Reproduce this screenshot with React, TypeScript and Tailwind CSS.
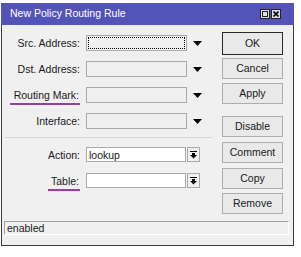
import type { ReactNode } from 'react';

const font = { fontFamily: '"Liberation Sans", Arial, sans-serif' };

function Arrow() {
  return (
    <svg width="9" height="5" viewBox="0 0 9 5" className="ml-[6px] shrink-0">
      <polygon points="0,0 9,0 4.5,5" fill="#000" />
    </svg>
  );
}

function DropButton() {
  return (
    <div className="w-[13px] h-[15px] ml-[1px] border border-[#a9a9a9] bg-[#f0f0f0] flex items-center justify-center shrink-0">
      <svg width="7" height="8" viewBox="0 0 7 8">
        <rect x="0" y="0" width="7" height="1" fill="#000" />
        <rect x="2" y="2" width="3" height="2" fill="#000" />
        <polygon points="0,4 7,4 3.5,7.5" fill="#000" />
      </svg>
    </div>
  );
}

function Label({ children, mark }: { children: ReactNode; mark?: string }) {
  return (
    <div className="w-[78px] shrink-0 flex justify-end items-center h-full">
      {mark ? (
        <span className={`inline-block leading-[12px] pb-[2px] mt-[4px] border-b-2 border-[#9b3ca0] ${mark}`}>{children}</span>
      ) : (
        <span className="leading-[12px]">{children}</span>
      )}
    </div>
  );
}

function Btn({ children, primary, className = '' }: { children: ReactNode; primary?: boolean; className?: string }) {
  return (
    <div
      className={`w-[61px] flex items-center justify-center bg-[#e9e9e9] ${primary ? 'h-[23px] border border-[#2a2a2a]' : 'h-[21px] border border-[#adadad]'} ${className}`}
    >
      {children}
    </div>
  );
}

export default function App() {
  return (
    <div className="w-[301px] h-[257px] bg-white pt-[3px] pl-[1px] text-[10.5px] text-[#1a1a1a]" style={font}>
      <div className="w-[293px] h-[243px] flex flex-col">
        {/* title bar */}
        <div className="h-[22px] bg-[#5454b8] flex items-center pl-[9px] pr-[13px] text-white shrink-0">
          <span className="flex-1 text-[10.5px]">New Policy Routing Rule</span>
          <div className="w-[10px] h-[10px] bg-[#e0e0e0] border border-[#222] flex items-center justify-center">
            <div className="w-[6px] h-[6px] border border-[#222]" />
          </div>
          <div className="w-[10px] h-[10px] ml-[1px] bg-[#e0e0e0] border border-[#222] flex items-center justify-center">
            <svg width="6" height="6" viewBox="0 0 6 6">
              <path d="M0.5 0.5 L5.5 5.5 M5.5 0.5 L0.5 5.5" stroke="#000" strokeWidth="1.6" />
            </svg>
          </div>
        </div>

        {/* body */}
        <div className="flex-1 bg-[#f0f0f0] border-x border-b border-[#3a3a3a] flex flex-col">
          <div className="flex">
            {/* form */}
            <div className="w-[210px] pt-[10px] flex flex-col">
              <div className="h-[16px] flex items-center">
                <Label>Src. Address:</Label>
                <div className="ml-[6px] w-[101px] h-[16px] border border-[#a9a9a9] p-[1px]">
                  <div className="w-full h-full border border-dotted border-black" />
                </div>
                <Arrow />
              </div>
              <div className="h-[16px] mt-[10px] flex items-center">
                <Label>Dst. Address:</Label>
                <div className="ml-[6px] w-[101px] h-[16px] border border-[#a9a9a9]" />
                <Arrow />
              </div>
              <div className="h-[16px] mt-[10px] flex items-center">
                <Label mark="pl-[4px] pr-[1px]">Routing Mark:</Label>
                <div className="ml-[6px] w-[101px] h-[16px] border border-[#a9a9a9]" />
                <Arrow />
              </div>
              <div className="h-[16px] mt-[10px] flex items-center">
                <Label>Interface:</Label>
                <div className="ml-[6px] w-[101px] h-[16px] border border-[#a9a9a9]" />
                <Arrow />
              </div>
              <div className="mt-[8px] ml-[3px] w-[207px] border-t border-[#d4d4d4]" />
              <div className="h-[15px] mt-[9px] flex items-center">
                <Label>Action:</Label>
                <div className="ml-[6px] w-[100px] h-[15px] border border-[#a9a9a9] bg-white flex items-center pl-[2px]">
                  <span className="leading-[12px]">lookup</span>
                </div>
                <DropButton />
              </div>
              <div className="h-[15px] mt-[11px] flex items-center">
                <Label mark="pl-[3px] pr-[1px]">Table:</Label>
                <div className="ml-[6px] w-[100px] h-[15px] border border-[#a9a9a9] bg-white" />
                <DropButton />
              </div>
            </div>

            {/* buttons */}
            <div className="ml-[10px] pt-[7px] flex flex-col">
              <Btn primary>OK</Btn>
              <Btn className="mt-[3px]">Cancel</Btn>
              <Btn className="mt-[4px]">Apply</Btn>
              <Btn className="mt-[12px]">Disable</Btn>
              <Btn className="mt-[5px]">Comment</Btn>
              <Btn className="mt-[5px]">Copy</Btn>
              <Btn className="mt-[4px]">Remove</Btn>
            </div>
          </div>

          {/* status bar */}
          <div className="mt-auto mb-[10px] ml-[2px] w-[285px] h-[14px] border-t border-l border-[#a0a0a0] border-b border-r border-b-white border-r-white flex items-center pl-[2px]">
            <span className="leading-[12px]">enabled</span>
          </div>
        </div>
      </div>
    </div>
  );
}
